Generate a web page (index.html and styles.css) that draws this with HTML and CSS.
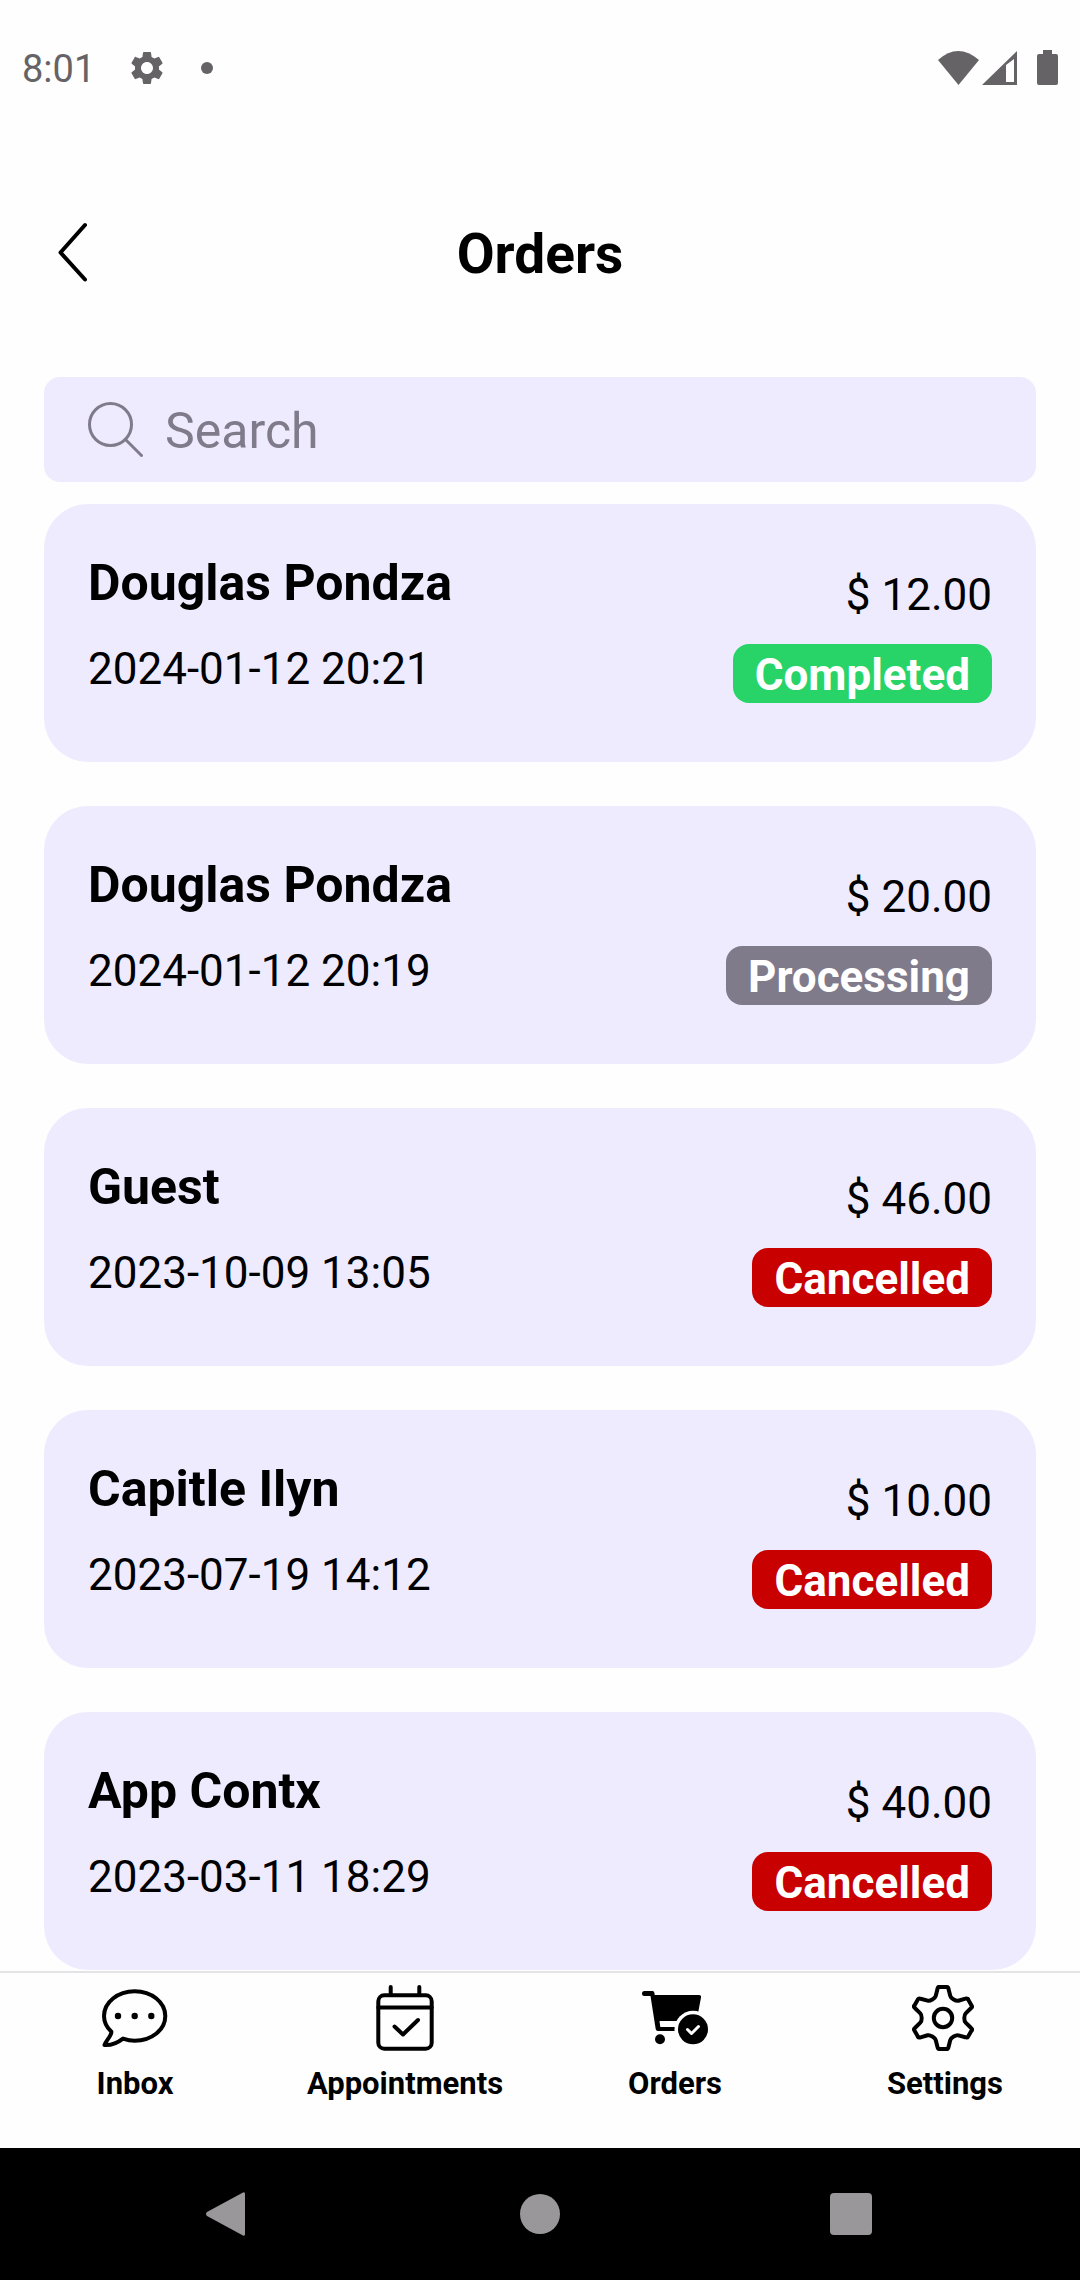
FILE: index.html
```html
<!DOCTYPE html>
<html lang="en">
<head>
<meta charset="utf-8">
<meta name="viewport" content="width=device-width, initial-scale=1">
<title>Orders</title>
<link rel="stylesheet" href="styles.css">
</head>
<body>
<div class="status-bar">
  <span class="clock">8:01</span>
  <svg class="status-gear" viewBox="0 0 24 24" aria-hidden="true"><path d="M19.14 12.94c.04-.3.06-.61.06-.94 0-.32-.02-.64-.07-.94l2.03-1.58a.49.49 0 0 0 .12-.61l-1.92-3.32a.488.488 0 0 0-.59-.22l-2.39.96c-.5-.38-1.03-.7-1.62-.94l-.36-2.54a.484.484 0 0 0-.48-.41h-3.84c-.24 0-.43.17-.47.41l-.36 2.54c-.59.24-1.13.57-1.62.94l-2.39-.96c-.22-.08-.47 0-.59.22L2.74 8.87c-.12.21-.08.47.12.61l2.03 1.58c-.05.3-.09.63-.09.94s.02.64.07.94l-2.03 1.58a.49.49 0 0 0-.12.61l1.92 3.32c.12.22.37.29.59.22l2.39-.96c.5.38 1.03.7 1.62.94l.36 2.54c.05.24.24.41.48.41h3.84c.24 0 .44-.17.47-.41l.36-2.54c.59-.24 1.13-.56 1.62-.94l2.39.96c.22.08.47 0 .59-.22l1.92-3.32c.12-.22.07-.47-.12-.61l-2.01-1.58zM12 15.6c-1.98 0-3.6-1.62-3.6-3.6s1.62-3.6 3.6-3.6 3.6 1.62 3.6 3.6-1.62 3.6-3.6 3.6z"/></svg>
  <span class="status-dot"></span>
  <svg class="status-signals" viewBox="0 0 120 36" aria-hidden="true">
    <path d="M0 10Q20-8 41 10L20.500 35z"/>
    <path fill-rule="evenodd" d="M44 35L79 1v34zM68 15v17h8V9z"/>
    <path d="M105 0h9v4h4q2 0 2 2v27q0 2-2 2h-17q-2 0-2-2V6q0-2 2-2h4z"/>
  </svg>
</div>

<header class="header">
  <button class="back" type="button" aria-label="Back">
    <svg viewBox="0 0 32 66" aria-hidden="true"><path d="M29 4L4.500 31.500l24.500 27"/></svg>
  </button>
  <h1 class="title">Orders</h1>
</header>

<main class="content">
  <label class="search">
    <svg viewBox="0 0 56 56" aria-hidden="true"><circle cx="22.500" cy="22.500" r="21"/><path d="M37.500 37.500l16 16"/></svg>
    <input type="search" placeholder="Search" aria-label="Search">
  </label>
  <ul class="orders">
    <li class="order">
      <div class="who"><h2 class="name">Douglas Pondza</h2><time class="date">2024-01-12 20:21</time></div>
      <div class="sum"><span class="price">$ 12.00</span><span class="badge completed">Completed</span></div>
    </li>
    <li class="order">
      <div class="who"><h2 class="name">Douglas Pondza</h2><time class="date">2024-01-12 20:19</time></div>
      <div class="sum"><span class="price">$ 20.00</span><span class="badge processing">Processing</span></div>
    </li>
    <li class="order">
      <div class="who"><h2 class="name">Guest</h2><time class="date">2023-10-09 13:05</time></div>
      <div class="sum"><span class="price">$ 46.00</span><span class="badge cancelled">Cancelled</span></div>
    </li>
    <li class="order">
      <div class="who"><h2 class="name">Capitle Ilyn</h2><time class="date">2023-07-19 14:12</time></div>
      <div class="sum"><span class="price">$ 10.00</span><span class="badge cancelled">Cancelled</span></div>
    </li>
    <li class="order">
      <div class="who"><h2 class="name">App Contx</h2><time class="date">2023-03-11 18:29</time></div>
      <div class="sum"><span class="price">$ 40.00</span><span class="badge cancelled">Cancelled</span></div>
    </li>
  </ul>
</main>

<nav class="tabs">
  <a class="tab" href="#inbox">
    <svg class="line-icon" viewBox="0 0 66 66" aria-hidden="true">
      <path d="M21 53.600C25 55 29 55.800 32.700 55.800C49.700 55.800 63.300 44.700 63.300 31S49.700 6.200 32.700 6.200 2 17.300 2 31C2 37.200 4.800 42.400 9.400 46.800C9.500 51 3.500 56 2.500 60C9 60.500 16 57.500 21 53.600z"/>
      <g class="solid"><circle cx="16" cy="31" r="3.200"/><circle cx="32.700" cy="31" r="3.200"/><circle cx="49.300" cy="31" r="3.200"/></g>
    </svg>
    <span>Inbox</span>
  </a>
  <a class="tab" href="#appointments">
    <svg class="line-icon" viewBox="0 0 66 66" aria-hidden="true">
      <rect x="6.300" y="10.300" width="53.400" height="53.400" rx="6"/>
      <path d="M6.300 22.500h53.400M18.700 2v8M47.300 2v8M22.500 41.500l8.500 8 15-14.500"/>
    </svg>
    <span>Appointments</span>
  </a>
  <a class="tab" href="#orders" aria-current="page">
    <svg viewBox="0 0 66 66" aria-hidden="true">
      <path d="M2.500 6h8q2 0 2.200 4H57q2.500 0 2 2.500L55.500 31q-1 5-5 5H17.500l.8 6H33v4H16q-2 0-2.300-2L8.500 11h-6a2.500 2.500 0 0 1 0-5z"/>
      <circle cx="18" cy="54.300" r="5"/>
      <circle class="cutout" cx="51" cy="44.300" r="18.500"/>
      <circle cx="51" cy="44.300" r="15"/>
      <path class="tick" d="M45.500 44.500l4 4 7-7"/>
    </svg>
    <span>Orders</span>
  </a>
  <a class="tab" href="#settings">
    <svg class="line-icon" viewBox="-31 -33 66 66" aria-hidden="true">
      <defs><path id="tooth" d="M-4-31H4Q5.200-31 5.500-29L7.300-22C7.900-19.500 12.900-16.600 15.400-17.300L22.400-19.300Q24.200-20 24.850-19"/></defs>
      <circle r="9.200"/>
      <use href="#tooth"/><use href="#tooth" transform="rotate(60)"/><use href="#tooth" transform="rotate(120)"/>
      <use href="#tooth" transform="rotate(180)"/><use href="#tooth" transform="rotate(240)"/><use href="#tooth" transform="rotate(300)"/>
    </svg>
    <span>Settings</span>
  </a>
</nav>

<div class="system-bar">
  <button type="button" aria-label="System back"><svg viewBox="0 0 44 44" aria-hidden="true"><path d="M37 .5q2-1 2 1.500v40q0 2.500-2 1.500L1 24q-2-2 0-4z"/></svg></button>
  <button type="button" aria-label="Home"><svg viewBox="0 0 44 44" aria-hidden="true"><circle cx="22" cy="22" r="20"/></svg></button>
  <button type="button" aria-label="Recent apps"><svg viewBox="0 0 44 44" aria-hidden="true"><rect y="1" width="42" height="42" rx="4"/></svg></button>
</div>
</body>
</html>
```
FILE: styles.css
```css
* {
  box-sizing: border-box;
  margin: 0;
}

body {
  display: flex;
  flex-direction: column;
  min-height: 100vh;
  background: #fefefe;
  color: #000;
  font-family: Roboto, "Liberation Sans", sans-serif;
}

svg {
  display: block;
  flex: none;
}

button {
  padding: 0;
  border: 0;
  background: none;
}

/* Device status bar */
.status-bar {
  display: flex;
  align-items: center;
  padding: 46px 22px 44px;
  color: #656366;
  fill: currentColor;
}

.clock {
  padding-top: 2px;
  font-size: 38px;
  line-height: 42px;
}

.status-gear {
  width: 40px;
  height: 40px;
  margin-left: 32px;
}

.status-dot {
  width: 12px;
  height: 12px;
  margin-left: 34px;
  border-radius: 50%;
  background: currentColor;
}

.status-signals {
  width: 120px;
  height: 36px;
  margin-left: auto;
}

/* Page header */
.header {
  display: grid;
  grid-template-columns: 1fr auto 1fr;
  align-items: center;
  padding: 87px 56px 90px;
}

.back svg {
  width: 32px;
  height: 66px;
  fill: none;
  stroke: #000;
  stroke-width: 4;
  stroke-linecap: round;
  stroke-linejoin: round;
}

.title {
  font-size: 55px;
  line-height: 66px;
}

/* Search and order list */
.content {
  flex: 1;
  padding: 0 44px;
}

.search {
  display: flex;
  align-items: center;
  gap: 21px;
  height: 105px;
  padding: 0 44px;
  border-radius: 16px;
  background: #efebfe;
}

.search svg {
  width: 56px;
  height: 56px;
  fill: none;
  stroke: #807b8b;
  stroke-width: 3;
  stroke-linecap: round;
}

.search input {
  flex: 1;
  min-width: 0;
  padding: 3px 0 0;
  border: 0;
  outline: 0;
  background: none;
  color: #000;
  font: inherit;
  font-size: 50px;
  line-height: 60px;
}

.search input::placeholder {
  color: #807b8b;
  opacity: 1;
}

.orders {
  display: grid;
  gap: 44px;
  padding: 22px 0 0;
  list-style: none;
}

.order {
  display: flex;
  justify-content: space-between;
  align-items: flex-start;
  padding: 50px 44px 59px;
  border-radius: 44px;
  background: #efebfe;
}

.who {
  display: grid;
  gap: 30px;
}

.name {
  font-size: 50px;
  line-height: 59px;
}

.date,
.price {
  font-size: 44px;
  line-height: 52px;
}

.sum {
  display: grid;
  justify-items: end;
  gap: 23px;
  padding-top: 15px;
}

.badge {
  padding: 4px 22px 0;
  border-radius: 16px;
  color: #fff;
  font-size: 44px;
  font-weight: 700;
  line-height: 55px;
}

.completed {
  background: #28d468;
}

.processing {
  background: #807b8b;
}

.cancelled {
  background: #c80000;
}

/* Bottom tabs */
.tabs {
  display: grid;
  grid-template-columns: repeat(4, 1fr);
  margin-top: 1px;
  padding: 12px 0 46px;
  border-top: 2px solid #e4e3e6;
}

.tab {
  display: flex;
  flex-direction: column;
  align-items: center;
  gap: 15px;
  color: #000;
  font-size: 31px;
  font-weight: 700;
  line-height: 36px;
  text-decoration: none;
}

.tab svg {
  width: 66px;
  height: 66px;
}

.line-icon {
  fill: none;
  stroke: #000;
  stroke-width: 4;
  stroke-linecap: round;
  stroke-linejoin: round;
}

.solid {
  fill: #000;
  stroke: none;
}

.cutout {
  fill: #fefefe;
}

.tick {
  fill: none;
  stroke: #fefefe;
  stroke-width: 3;
  stroke-linecap: round;
  stroke-linejoin: round;
}

/* Device navigation bar */
.system-bar {
  display: flex;
  justify-content: space-between;
  padding: 44px 206px;
  background: #000;
}

.system-bar svg {
  width: 44px;
  height: 44px;
  fill: #9a979b;
}
```
